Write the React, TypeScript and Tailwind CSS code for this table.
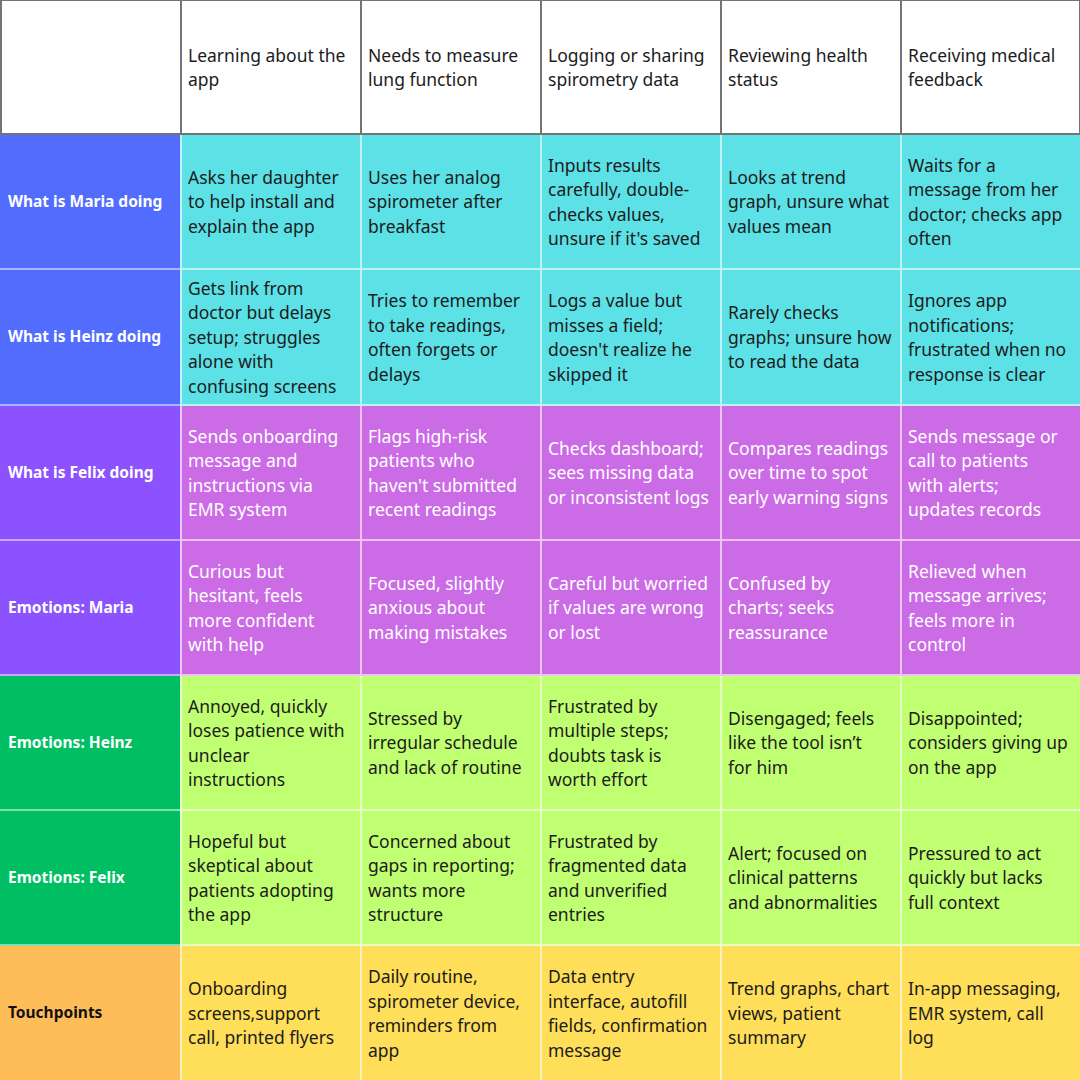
import React from 'react';

type Row = {
  label: string;
  labelBg: string;
  labelText: string;
  cellBg: string;
  cellText: string;
  cells: string[][];
};

const steps: string[][] = [
  ['Learning about the', 'app'],
  ['Needs to measure', 'lung function'],
  ['Logging or sharing', 'spirometry data'],
  ['Reviewing health', 'status'],
  ['Receiving medical', 'feedback'],
];

const rows: Row[] = [
  {
    label: 'What is Maria doing',
    labelBg: 'bg-[#526dfe]',
    labelText: 'text-white',
    cellBg: 'bg-[#5ce1e6]',
    cellText: 'text-[#1c1c1c]',
    cells: [
      ['Asks her daughter', 'to help install and', 'explain the app'],
      ['Uses her analog', 'spirometer after', 'breakfast'],
      ['Inputs results', 'carefully, double-', 'checks values,', "unsure if it's saved"],
      ['Looks at trend', 'graph, unsure what', 'values mean'],
      ['Waits for a', 'message from her', 'doctor; checks app', 'often'],
    ],
  },
  {
    label: 'What is Heinz doing',
    labelBg: 'bg-[#526dfe]',
    labelText: 'text-white',
    cellBg: 'bg-[#5ce1e6]',
    cellText: 'text-[#1c1c1c]',
    cells: [
      ['Gets link from', 'doctor but delays', 'setup; struggles', 'alone with', 'confusing screens'],
      ['Tries to remember', 'to take readings,', 'often forgets or', 'delays'],
      ['Logs a value but', 'misses a field;', "doesn't realize he", 'skipped it'],
      ['Rarely checks', 'graphs; unsure how', 'to read the data'],
      ['Ignores app', 'notifications;', 'frustrated when no', 'response is clear'],
    ],
  },
  {
    label: 'What is Felix doing',
    labelBg: 'bg-[#8c52ff]',
    labelText: 'text-white',
    cellBg: 'bg-[#cb6ce6]',
    cellText: 'text-white',
    cells: [
      ['Sends onboarding', 'message and', 'instructions via', 'EMR system'],
      ['Flags high-risk', 'patients who', "haven't submitted", 'recent readings'],
      ['Checks dashboard;', 'sees missing data', 'or inconsistent logs'],
      ['Compares readings', 'over time to spot', 'early warning signs'],
      ['Sends message or', 'call to patients', 'with alerts;', 'updates records'],
    ],
  },
  {
    label: 'Emotions: Maria',
    labelBg: 'bg-[#8c52ff]',
    labelText: 'text-white',
    cellBg: 'bg-[#cb6ce6]',
    cellText: 'text-white',
    cells: [
      ['Curious but', 'hesitant, feels', 'more confident', 'with help'],
      ['Focused, slightly', 'anxious about', 'making mistakes'],
      ['Careful but worried', 'if values are wrong', 'or lost'],
      ['Confused by', 'charts; seeks', 'reassurance'],
      ['Relieved when', 'message arrives;', 'feels more in', 'control'],
    ],
  },
  {
    label: 'Emotions: Heinz',
    labelBg: 'bg-[#00bf63]',
    labelText: 'text-white',
    cellBg: 'bg-[#c1ff72]',
    cellText: 'text-[#1c1c1c]',
    cells: [
      ['Annoyed, quickly', 'loses patience with', 'unclear', 'instructions'],
      ['Stressed by', 'irregular schedule', 'and lack of routine'],
      ['Frustrated by', 'multiple steps;', 'doubts task is', 'worth effort'],
      ['Disengaged; feels', 'like the tool isn\u2019t', 'for him'],
      ['Disappointed;', 'considers giving up', 'on the app'],
    ],
  },
  {
    label: 'Emotions: Felix',
    labelBg: 'bg-[#00bf63]',
    labelText: 'text-white',
    cellBg: 'bg-[#c1ff72]',
    cellText: 'text-[#1c1c1c]',
    cells: [
      ['Hopeful but', 'skeptical about', 'patients adopting', 'the app'],
      ['Concerned about', 'gaps in reporting;', 'wants more', 'structure'],
      ['Frustrated by', 'fragmented data', 'and unverified', 'entries'],
      ['Alert; focused on', 'clinical patterns', 'and abnormalities'],
      ['Pressured to act', 'quickly but lacks', 'full context'],
    ],
  },
  {
    label: 'Touchpoints',
    labelBg: 'bg-[#ffbd59]',
    labelText: 'text-[#111]',
    cellBg: 'bg-[#ffde59]',
    cellText: 'text-[#1c1c1c]',
    cells: [
      ['Onboarding', 'screens,support', 'call, printed flyers'],
      ['Daily routine,', 'spirometer device,', 'reminders from', 'app'],
      ['Data entry', 'interface, autofill', 'fields, confirmation', 'message'],
      ['Trend graphs, chart', 'views, patient', 'summary'],
      ['In-app messaging,', 'EMR system, call', 'log'],
    ],
  },
];

function Lines({ lines }: { lines: string[] }) {
  return (
    <div className="whitespace-nowrap">
      {lines.map((l, i) => (
        <div key={i}>{l}</div>
      ))}
    </div>
  );
}

export default function App() {
  return (
    <div
      className="w-[1080px] h-[1080px] bg-white overflow-hidden"
      style={{ fontFamily: '"Noto Sans", "Open Sans", Arial, sans-serif' }}
    >
      <div className="grid grid-cols-[180px_180px_180px_180px_180px_180px] grid-rows-[135px_135px_136px_135px_135px_135px_135px_134px]">
        {/* header */}
        <div className="bg-white border-t border-l-2 border-b-2 border-[#737373]" />
        {steps.map((s, i) => (
          <div
            key={i}
            className={`bg-white border-t border-l-2 border-b-2 border-[#737373] flex items-center pl-1.5 text-[17.5px] leading-[24.5px] text-[#1c1c1c] overflow-hidden ${
              i === steps.length - 1 ? 'border-r' : ''
            }`}
          >
            <Lines lines={s} />
          </div>
        ))}

        {rows.map((r, ri) => {
          const last = ri === rows.length - 1;
          return (
            <React.Fragment key={r.label}>
              <div
                className={`${r.labelBg} ${r.labelText} ${last ? '' : 'border-b-2'} border-white/50 flex items-center pl-2 text-[15.5px] font-bold`}
              >
                {r.label}
              </div>
              {r.cells.map((c, i) => (
                <div
                  key={i}
                  className={`${r.cellBg} ${r.cellText} border-l-2 ${last ? '' : 'border-b-2'} border-white/60 flex items-center pl-1.5 text-[17.5px] leading-[24.5px] overflow-hidden`}
                >
                  <Lines lines={c} />
                </div>
              ))}
            </React.Fragment>
          );
        })}
      </div>
    </div>
  );
}
